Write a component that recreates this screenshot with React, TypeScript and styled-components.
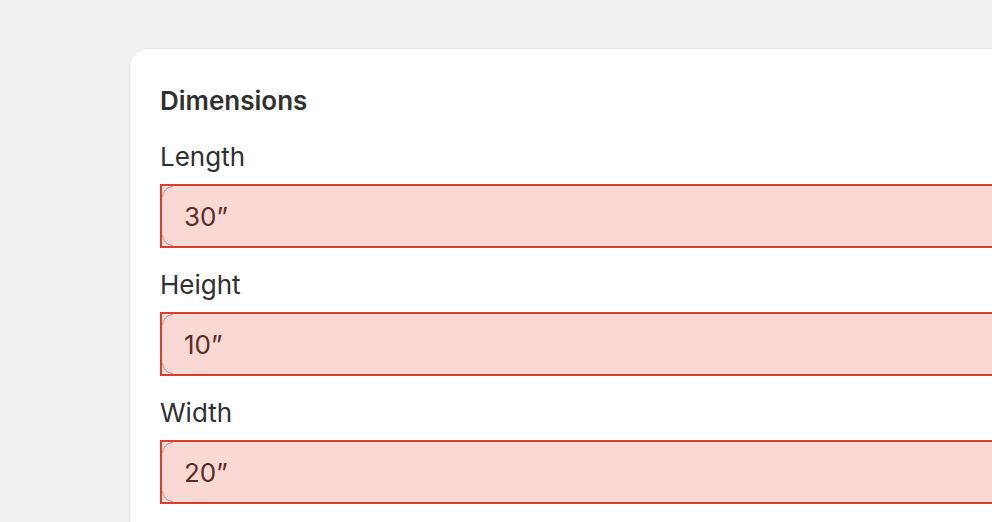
import React from "react";
import styled, { createGlobalStyle } from "styled-components";

const Global = createGlobalStyle`
  html, body { margin: 0; padding: 0; background: #f1f1f1; }
  body { font-family: Inter, "Noto Sans", sans-serif; -webkit-font-smoothing: antialiased; }
`;

const Page = styled.div`
  width: 992px;
  height: 522px;
  overflow: hidden;
  padding: 48px 0 0 129px;
  box-sizing: border-box;
`;

const Card = styled.section`
  width: 960px;
  height: 600px;
  box-sizing: border-box;
  background: #ffffff;
  border: 1px solid #e3e3e3;
  border-radius: 18px;
  padding: 32px 30px;
  display: flex;
  flex-direction: column;
`;

const Heading = styled.h2`
  margin: 0 0 16px;
  font-size: 26px;
  line-height: 40px;
  font-weight: 600;
  color: #303030;
`;

const Field = styled.div`
  display: flex;
  flex-direction: column;
  margin-bottom: 17px;
`;

const Label = styled.label`
  font-size: 26px;
  line-height: 40px;
  font-weight: 400;
  color: #303030;
  margin-bottom: 7px;
`;

const InputBox = styled.div`
  position: relative;
  height: 64px;
  background: #fad8d4;
  outline: 2px solid #d9402a;
  outline-offset: -2px;
`;

const Corner = styled.svg`
  position: absolute;
  left: 0;
  top: 0;
  width: 18px;
  height: 64px;
  pointer-events: none;
`;

const Input = styled.input`
  display: block;
  width: 100%;
  height: 100%;
  box-sizing: border-box;
  border: none;
  background: transparent;
  outline: none;
  margin: 0;
  padding: 0 0 0 24px;
  font-family: Inter, "Noto Sans", sans-serif;
  font-size: 26px;
  color: #5a2d28;
`;

const fields = [
  { label: "Length", value: "30”" },
  { label: "Height", value: "10”" },
  { label: "Width", value: "20”" },
];

export default function App() {
  return (
    <>
      <Global />
      <Page>
        <Card>
          <Heading>Dimensions</Heading>
          {fields.map((f) => (
            <Field key={f.label}>
              <Label>{f.label}</Label>
              <InputBox>
                <Input defaultValue={f.value} readOnly />
                <Corner viewBox="0 0 18 64" aria-hidden="true">
                  <path
                    d="M13 2.5 A10.5 10.5 0 0 0 2.5 13 M2.5 51 A10.5 10.5 0 0 0 13 61.5"
                    fill="none"
                    stroke="#a39a98"
                    strokeWidth="1"
                  />
                </Corner>
              </InputBox>
            </Field>
          ))}
        </Card>
      </Page>
    </>
  );
}
